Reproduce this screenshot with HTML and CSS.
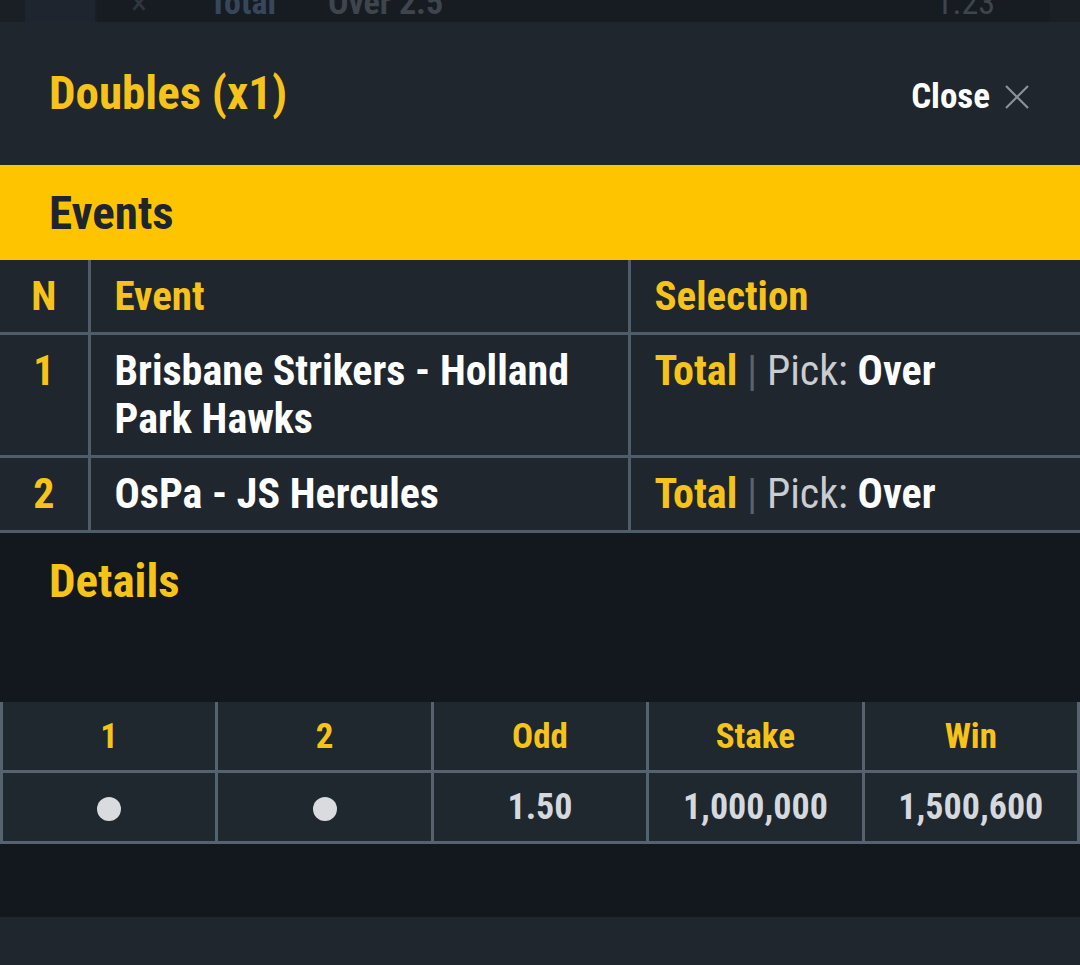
FILE: index.html
```html
<!DOCTYPE html>
<html lang="en">
<head>
  <meta charset="UTF-8">
  <meta name="viewport" content="width=device-width, initial-scale=1.0">
  <title>Doubles</title>
  <link rel="stylesheet" href="styles.css">
</head>
<body>

<!-- Ligne du coupon visible derrière la feuille -->
<div class="peek">
  <div class="peek-side"></div>
  <div class="peek-row">
    <span class="peek-x">&times;</span>
    <span class="peek-market">Total</span>
    <span class="peek-pick">Over 2.5</span>
    <span class="peek-odd">1.23</span>
  </div>
</div>

<div class="sheet">
  <div class="sheet-head">
    <h1 class="sheet-title">Doubles (x1)</h1>
    <button class="close-btn">
      Close
      <svg class="close-icon" viewBox="0 0 26 26" width="26" height="26">
        <path d="M2 2 L24 24 M24 2 L2 24" stroke="#8b9199" stroke-width="2.2" fill="none"/>
      </svg>
    </button>
  </div>

  <div class="section-bar">Events</div>

  <table class="events">
    <colgroup>
      <col class="w-n">
      <col class="w-event">
      <col>
    </colgroup>
    <tr>
      <th class="col-n">N</th>
      <th>Event</th>
      <th>Selection</th>
    </tr>
    <tr>
      <td class="col-n num">1</td>
      <td>Brisbane Strikers - Holland Park Hawks</td>
      <td><span class="market">Total</span> <span class="sep">|</span> <span class="pick">Pick:</span> Over</td>
    </tr>
    <tr>
      <td class="col-n num">2</td>
      <td>OsPa - JS Hercules</td>
      <td><span class="market">Total</span> <span class="sep">|</span> <span class="pick">Pick:</span> Over</td>
    </tr>
  </table>

  <div class="details">
    <h2 class="details-title">Details</h2>
  </div>

  <table class="combo">
    <tr>
      <th>1</th>
      <th>2</th>
      <th>Odd</th>
      <th>Stake</th>
      <th>Win</th>
    </tr>
    <tr>
      <td><span class="dot"></span></td>
      <td><span class="dot"></span></td>
      <td>1.50</td>
      <td>1,000,000</td>
      <td>1,500,600</td>
    </tr>
  </table>

  <div class="spacer"></div>
  <div class="footer"></div>
</div>

</body>
</html>
```

FILE: styles.css
```css
body {
  margin: 0;
  background: #13171e;
  font-family: "Roboto", "Liberation Sans", sans-serif;
  font-stretch: 78%;
  font-weight: 700;
}

/* Ligne en arrière-plan, coupée par la feuille */
.peek {
  height: 22px;
  display: flex;
  overflow: hidden;
  background: #1a1f26;
}

.peek-side {
  width: 70px;
  margin-left: 25px;
  background: #1e252e;
}

.peek-row {
  flex: 1;
  margin: 0 30px 0 2px;
  display: flex;
  align-items: flex-end;
  background: #171c23;
  font-size: 34px;
  line-height: 1;
  padding-bottom: 3px;
}

.peek-x {
  margin-left: 34px;
  color: #2f363f;
  font-weight: 400;
}

.peek-market {
  margin-left: 62px;
  color: #36475c;
}

.peek-pick {
  margin-left: 52px;
  color: #3f454d;
}

.peek-odd {
  margin-left: auto;
  margin-right: 55px;
  color: #3f454d;
  font-weight: 400;
}

.sheet {
  background: #13171e;
}

.sheet-head {
  height: 143px;
  background: #20262d;
  display: flex;
  align-items: center;
  justify-content: space-between;
  padding: 0 50px 0 49px;
}

.sheet-title {
  margin: 0 0 2px 0;
  color: #f6c31b;
  font-size: 47px;
  font-weight: 700;
}

.close-btn {
  display: flex;
  align-items: center;
  gap: 14px;
  margin-top: 6px;
  background: none;
  border: none;
  padding: 0;
  color: #ffffff;
  font-family: inherit;
  font-stretch: inherit;
  font-weight: 700;
  font-size: 35px;
}

.section-bar {
  height: 95px;
  background: #fec400;
  color: #1e252d;
  font-size: 47px;
  display: flex;
  align-items: center;
  padding-left: 49px;
}

.events {
  width: 100%;
  border-collapse: collapse;
  table-layout: fixed;
  background: #1f262e;
  font-size: 42px;
}

.w-n {
  width: 89px;
}

.w-event {
  width: 540px;
}

.events th,
.events td {
  border: 3px solid #4f5c6a;
  padding: 12px 24px;
  line-height: 48px;
  text-align: left;
  vertical-align: top;
  color: #ffffff;
}

.events tr:first-child th {
  border-top: none;
}

.events th:first-child,
.events td:first-child {
  border-left: none;
}

.events th:last-child,
.events td:last-child {
  border-right: none;
}

.events th {
  color: #f6c31b;
  font-size: 41px;
}

.events .col-n {
  padding: 12px 0;
  text-align: center;
}

.events .num {
  color: #f6c31b;
}

.market {
  color: #f6c31b;
}

.sep {
  color: #59636e;
  font-weight: 400;
}

.pick {
  color: #c9ccd1;
  font-weight: 400;
}

.details {
  height: 169px;
  padding-left: 49px;
}

.details-title {
  margin: 0;
  padding-top: 22px;
  color: #f6c31b;
  font-size: 47px;
  line-height: 52px;
}

.combo {
  width: 100%;
  border-collapse: collapse;
  table-layout: fixed;
  background: #1f272f;
  font-size: 36px;
}

.combo th,
.combo td {
  border: 3px solid #56626f;
  height: 68px;
  padding: 0;
  text-align: center;
  vertical-align: middle;
}

.combo tr:first-child th {
  border-top: none;
}

.combo th {
  color: #f6c31b;
  font-size: 35px;
}

.combo td {
  color: #d5d8dc;
}

.dot {
  display: inline-block;
  width: 24px;
  height: 24px;
  border-radius: 50%;
  background: #d9dbde;
  vertical-align: middle;
}

.spacer {
  height: 73px;
}

.footer {
  height: 60px;
  background: #1f262d;
}
```
